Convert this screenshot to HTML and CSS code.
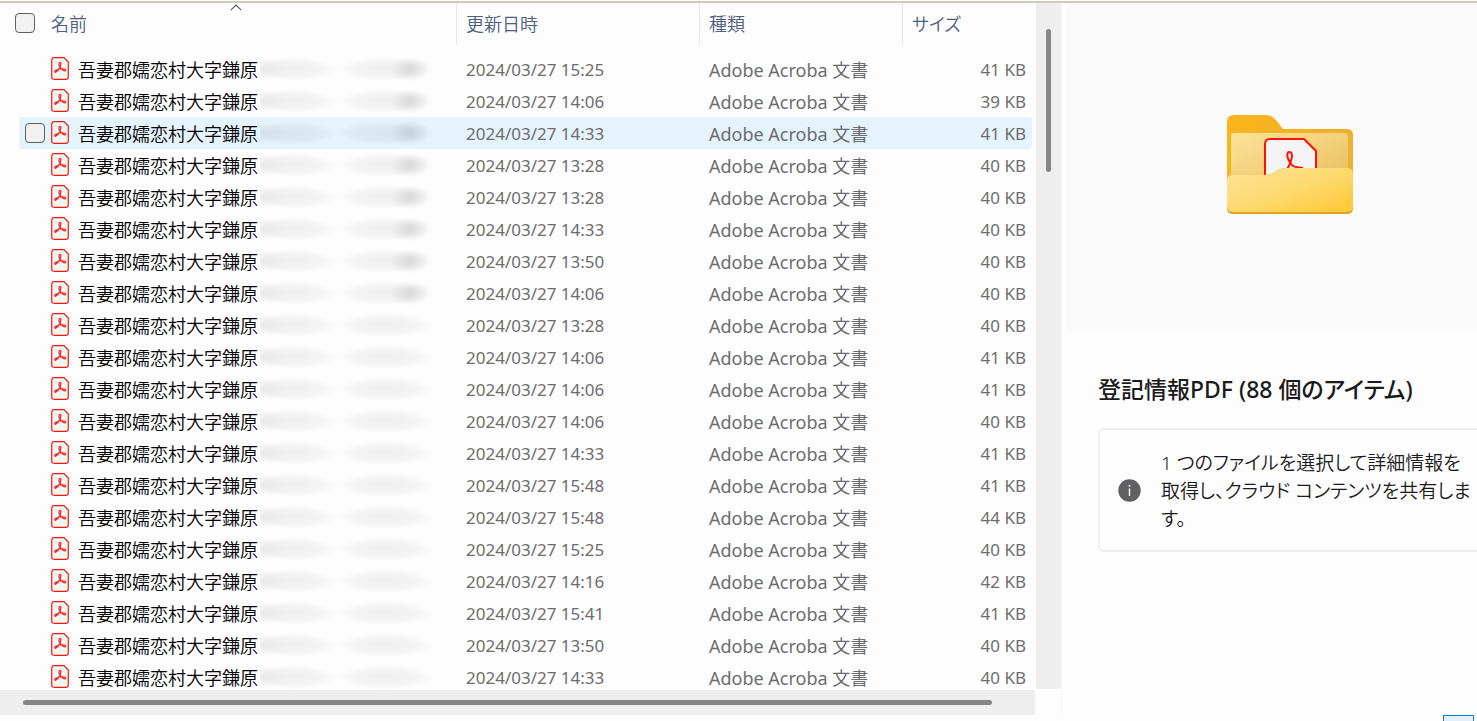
FILE: index.html
```html
<!DOCTYPE html>
<html lang="ja">
<head>
    <meta charset="UTF-8">
    <meta name="viewport" content="width=device-width, initial-scale=1.0">
    <title>登記情報PDF</title>
    <link rel="stylesheet" href="styles.css">
</head>
<body>
    <svg class="symbols" aria-hidden="true">
        <symbol id="pdf" viewBox="0 0 18 23">
            <path d="M3.2 .7H13L17.3 5V19.8Q17.3 22.3 14.8 22.3H3.2Q.7 22.3 .7 19.8V3.2Q.7 .7 3.2 .7Z" fill="#f5f3f3" stroke="#f01c10" stroke-width="1.2"/>
            <path d="M9 5.4C7.6 5.4 7.7 7.6 8.6 9.2C9.6 11 11.2 12.8 12.8 13.6C14.6 14.4 15.4 12.8 13.8 12.2C11.4 11.4 7 12.3 4.8 13.4C2.9 14.4 3.6 16 5 15C6.8 13.8 9.2 10.4 9.7 7.6C10 6.1 9.8 5.4 9 5.4Z" fill="none" stroke="#e8281e" stroke-width="1.2"/>
        </symbol>
    </svg>

    <div class="window">
        <div class="content">
            <main class="list">
                <table class="files">
                    <colgroup>
                        <col class="col-check">
                        <col class="col-name">
                        <col class="col-date">
                        <col class="col-type">
                        <col>
                    </colgroup>
                    <thead>
                        <tr>
                            <th><input type="checkbox" class="check check-all" aria-label="名前"></th>
                            <th class="name">名前
                                <svg class="sort" viewBox="0 0 12 7"><path d="M.8 6.2L6 1l5.2 5.2" fill="none" stroke="#555" stroke-width="1.1"/></svg>
                            </th>
                            <th class="line">更新日時</th>
                            <th class="line">種類</th>
                            <th class="line">サイズ</th>
                        </tr>
                    </thead>
                    <tbody>
                        <tr><td></td><td><div class="file"><svg><use href="#pdf"/></svg>吾妻郡嬬恋村大字鎌原<i class="smudge dark"></i></div></td><td>2024/03/27 15:25</td><td class="type">Adobe Acroba 文書</td><td>41 KB</td></tr>
                        <tr><td></td><td><div class="file"><svg><use href="#pdf"/></svg>吾妻郡嬬恋村大字鎌原<i class="smudge dark"></i></div></td><td>2024/03/27 14:06</td><td class="type">Adobe Acroba 文書</td><td>39 KB</td></tr>
                        <tr class="hover"><td><input type="checkbox" class="check" aria-label="吾妻郡嬬恋村大字鎌原"></td><td><div class="file"><svg><use href="#pdf"/></svg>吾妻郡嬬恋村大字鎌原<i class="smudge dark"></i></div></td><td>2024/03/27 14:33</td><td class="type">Adobe Acroba 文書</td><td>41 KB</td></tr>
                        <tr><td></td><td><div class="file"><svg><use href="#pdf"/></svg>吾妻郡嬬恋村大字鎌原<i class="smudge dark"></i></div></td><td>2024/03/27 13:28</td><td class="type">Adobe Acroba 文書</td><td>40 KB</td></tr>
                        <tr><td></td><td><div class="file"><svg><use href="#pdf"/></svg>吾妻郡嬬恋村大字鎌原<i class="smudge dark"></i></div></td><td>2024/03/27 13:28</td><td class="type">Adobe Acroba 文書</td><td>40 KB</td></tr>
                        <tr><td></td><td><div class="file"><svg><use href="#pdf"/></svg>吾妻郡嬬恋村大字鎌原<i class="smudge dark"></i></div></td><td>2024/03/27 14:33</td><td class="type">Adobe Acroba 文書</td><td>40 KB</td></tr>
                        <tr><td></td><td><div class="file"><svg><use href="#pdf"/></svg>吾妻郡嬬恋村大字鎌原<i class="smudge dark"></i></div></td><td>2024/03/27 13:50</td><td class="type">Adobe Acroba 文書</td><td>40 KB</td></tr>
                        <tr><td></td><td><div class="file"><svg><use href="#pdf"/></svg>吾妻郡嬬恋村大字鎌原<i class="smudge dark"></i></div></td><td>2024/03/27 14:06</td><td class="type">Adobe Acroba 文書</td><td>40 KB</td></tr>
                        <tr><td></td><td><div class="file"><svg><use href="#pdf"/></svg>吾妻郡嬬恋村大字鎌原<i class="smudge"></i></div></td><td>2024/03/27 13:28</td><td class="type">Adobe Acroba 文書</td><td>40 KB</td></tr>
                        <tr><td></td><td><div class="file"><svg><use href="#pdf"/></svg>吾妻郡嬬恋村大字鎌原<i class="smudge"></i></div></td><td>2024/03/27 14:06</td><td class="type">Adobe Acroba 文書</td><td>41 KB</td></tr>
                        <tr><td></td><td><div class="file"><svg><use href="#pdf"/></svg>吾妻郡嬬恋村大字鎌原<i class="smudge"></i></div></td><td>2024/03/27 14:06</td><td class="type">Adobe Acroba 文書</td><td>41 KB</td></tr>
                        <tr><td></td><td><div class="file"><svg><use href="#pdf"/></svg>吾妻郡嬬恋村大字鎌原<i class="smudge"></i></div></td><td>2024/03/27 14:06</td><td class="type">Adobe Acroba 文書</td><td>40 KB</td></tr>
                        <tr><td></td><td><div class="file"><svg><use href="#pdf"/></svg>吾妻郡嬬恋村大字鎌原<i class="smudge"></i></div></td><td>2024/03/27 14:33</td><td class="type">Adobe Acroba 文書</td><td>41 KB</td></tr>
                        <tr><td></td><td><div class="file"><svg><use href="#pdf"/></svg>吾妻郡嬬恋村大字鎌原<i class="smudge"></i></div></td><td>2024/03/27 15:48</td><td class="type">Adobe Acroba 文書</td><td>41 KB</td></tr>
                        <tr><td></td><td><div class="file"><svg><use href="#pdf"/></svg>吾妻郡嬬恋村大字鎌原<i class="smudge"></i></div></td><td>2024/03/27 15:48</td><td class="type">Adobe Acroba 文書</td><td>44 KB</td></tr>
                        <tr><td></td><td><div class="file"><svg><use href="#pdf"/></svg>吾妻郡嬬恋村大字鎌原<i class="smudge"></i></div></td><td>2024/03/27 15:25</td><td class="type">Adobe Acroba 文書</td><td>40 KB</td></tr>
                        <tr><td></td><td><div class="file"><svg><use href="#pdf"/></svg>吾妻郡嬬恋村大字鎌原<i class="smudge"></i></div></td><td>2024/03/27 14:16</td><td class="type">Adobe Acroba 文書</td><td>42 KB</td></tr>
                        <tr><td></td><td><div class="file"><svg><use href="#pdf"/></svg>吾妻郡嬬恋村大字鎌原<i class="smudge"></i></div></td><td>2024/03/27 15:41</td><td class="type">Adobe Acroba 文書</td><td>41 KB</td></tr>
                        <tr><td></td><td><div class="file"><svg><use href="#pdf"/></svg>吾妻郡嬬恋村大字鎌原<i class="smudge"></i></div></td><td>2024/03/27 13:50</td><td class="type">Adobe Acroba 文書</td><td>40 KB</td></tr>
                        <tr><td></td><td><div class="file"><svg><use href="#pdf"/></svg>吾妻郡嬬恋村大字鎌原<i class="smudge"></i></div></td><td>2024/03/27 14:33</td><td class="type">Adobe Acroba 文書</td><td>40 KB</td></tr>
                    </tbody>
                </table>
            </main>
            <div class="scroll-y"><div class="thumb"></div></div>
            <div class="scroll-x"><div class="thumb"></div></div>
            <aside class="details">
                <div class="preview">
                    <svg class="folder" viewBox="0 0 127 100">
                        <defs>
                            <linearGradient id="inner" x1="0" y1="0" x2="1" y2="1">
                                <stop offset="0" stop-color="#fde39b"/>
                                <stop offset="1" stop-color="#e8bd5c"/>
                            </linearGradient>
                            <linearGradient id="front" x1="0" y1="0" x2="1" y2="1">
                                <stop offset="0" stop-color="#fee49a"/>
                                <stop offset=".5" stop-color="#fdd970"/>
                                <stop offset="1" stop-color="#ffc832"/>
                            </linearGradient>
                            <linearGradient id="back" x1="0" y1="0" x2="1" y2="0">
                                <stop offset="0" stop-color="#fbb51b"/>
                                <stop offset="1" stop-color="#efb02c"/>
                            </linearGradient>
                        </defs>
                        <path d="M0 7Q0 0 7 0H38Q45 0 49 5L56 14H120Q126 14 126 20V90H0Z" fill="url(#back)"/>
                        <path d="M4 21Q4 18 7 18H117Q121 18 121 21V70H4Z" fill="url(#inner)"/>
                        <path d="M38 70V29Q38 24 43 24H77L89 36V70Z" fill="#f4f4f5" stroke="#fe1204" stroke-width="2"/>
                        <path d="M59 56C65 47 67 37 62.500 37C58 37 61 47 66 51C69 53 73 52 76 53" fill="none" stroke="#fe1204" stroke-width="2"/>
                        <path d="M0 65Q0 60 5 60H37C49 60 49 53 59 53H120Q126 53 126 59V93Q126 99 120 99H6Q0 99 0 93Z" fill="#dea32b"/>
                        <path d="M0 65Q0 60 5 60H37C49 60 49 53 59 53H120Q126 53 126 59V91Q126 97 120 97H6Q0 97 0 91Z" fill="url(#front)"/>
                    </svg>
                </div>
                <h1>登記情報PDF (88 個のアイテム)</h1>
                <div class="info">
                    <svg class="info-icon" viewBox="0 0 23 23">
                        <circle cx="11.5" cy="11.5" r="11.2" fill="#606062"/>
                        <path d="M11.5 9.5V17" stroke="#fff" stroke-width="1.4"/>
                        <circle cx="11.5" cy="6.8" r="1" fill="#fff"/>
                    </svg>
                    <p>1 つのファイルを選択して詳細情報を取得し、クラウド コンテンツを共有します。</p>
                </div>
            </aside>
        </div>
        <footer class="status">
            <button type="button" class="view" aria-label="詳細"></button>
        </footer>
    </div>
</body>
</html>
```
FILE: styles.css
```css
* {
    box-sizing: border-box;
}
body {
    margin: 0;
    background-color: #fdfdfd;
    color: #6d6d6d;
    font-family: "Noto Sans", "Noto Sans CJK JP", sans-serif;
    font-size: 17px;
}
.symbols {
    display: none;
}
.window {
    display: flex;
    flex-direction: column;
    height: 100vh;
    padding-top: 1px;
    overflow: hidden;
}
.content {
    flex: 1;
    min-height: 0;
    display: grid;
    grid-template-columns: minmax(0, 1fr) 25px 416px;
    grid-template-rows: minmax(0, 1fr) 25px;
    border-top: 2px solid #cdcbbd;
}

/* file list */
.list {
    overflow: hidden;
    padding: 0 4px 0 19px;
}
.files {
    width: 100%;
    table-layout: fixed;
    border-collapse: separate;
    border-spacing: 0;
}
.col-check {
    width: 32px;
}
.col-name {
    width: 405px;
}
.col-date {
    width: 243px;
}
.col-type {
    width: 203px;
}
.files th {
    height: 42px;
    padding: 0 0 2px;
    text-align: left;
    font-family: "Noto Sans CJK JP", sans-serif;
    font-size: 18px;
    font-weight: 350;
    font-feature-settings: "palt";
    line-height: 24px;
    color: #4c607f;
}
.files th.line {
    padding-left: 9px;
    border-left: 1px solid #e6e6e6;
}
.files th.name {
    position: relative;
}
.sort {
    position: absolute;
    top: 1px;
    left: 179px;
    width: 12px;
    height: 7px;
}
.files tbody::before {
    content: "";
    display: block;
    height: 8px;
}
.files td {
    height: 32px;
    padding: 2px 0 0 10px;
    line-height: 24px;
    white-space: nowrap;
}
.files td:first-child {
    padding: 0 0 0 6px;
}
.files td:nth-child(2) {
    padding: 0;
}
.files td:last-child {
    padding-right: 6px;
    text-align: right;
}
.files td.type {
    font-size: 18px;
}
.hover td {
    background-color: #e5f3fd;
}
.hover td:first-child {
    border-radius: 3px 0 0 3px;
}
.hover td:last-child {
    border-radius: 0 3px 3px 0;
}
.check {
    appearance: none;
    display: block;
    width: 20px;
    height: 20px;
    margin: 0;
    border: 1px solid #5f5f5f;
    border-radius: 4px;
    background-color: #f1f1f1;
}
.check-all {
    margin-left: -4px;
}
.file {
    display: flex;
    align-items: center;
    color: #000;
    font-family: "Noto Sans CJK JP", sans-serif;
    font-size: 18px;
    font-weight: 350;
}
.file svg {
    flex: none;
    width: 18px;
    height: 23px;
    margin: 0 9px 2px 0;
}
.smudge {
    width: 172px;
    height: 26px;
    margin-left: 2px;
    background-image:
        radial-gradient(ellipse 46px 12px at 32px 50%, rgba(0, 0, 0, 0.06), rgba(0, 0, 0, 0.04) 60%, transparent),
        radial-gradient(ellipse 30px 12px at 0 50%, rgba(0, 0, 0, 0.04), transparent),
        radial-gradient(ellipse 50px 12px at 126px 50%, rgba(0, 0, 0, 0.06), rgba(0, 0, 0, 0.04) 60%, transparent);
}
.smudge.dark {
    background-image:
        radial-gradient(ellipse 46px 12px at 32px 50%, rgba(0, 0, 0, 0.06), rgba(0, 0, 0, 0.04) 60%, transparent),
        radial-gradient(ellipse 30px 12px at 0 50%, rgba(0, 0, 0, 0.04), transparent),
        radial-gradient(ellipse 50px 12px at 126px 50%, rgba(0, 0, 0, 0.06), rgba(0, 0, 0, 0.04) 60%, transparent),
        radial-gradient(ellipse 20px 13px at 150px 50%, rgba(0, 0, 0, 0.11), transparent);
}

/* scrollbars */
.scroll-y {
    grid-column: 2;
    margin-bottom: 1px;
    padding-top: 26px;
    background-color: #eee;
}
.scroll-y .thumb {
    width: 5px;
    height: 143px;
    margin-left: 10px;
    border-radius: 3px;
    background-color: #868686;
}
.scroll-x {
    grid-column: 1;
    grid-row: 2;
    margin-right: 1px;
    padding: 10px 43px 0 23px;
    background-color: #eee;
}
.scroll-x .thumb {
    height: 5px;
    border-radius: 3px;
    background-color: #868686;
}

/* details pane */
.details {
    grid-column: 3;
    grid-row: 1 / 3;
    min-width: 0;
    padding-left: 4px;
    border-left: 1px solid #f6f6f6;
}
.preview {
    display: flex;
    justify-content: center;
    align-items: center;
    height: 330px;
    padding-bottom: 6px;
    border-radius: 6px 0 0 6px;
    background-color: #fafafa;
}
.folder {
    width: 127px;
    height: 100px;
    margin-left: 38px;
}
.details h1 {
    margin: 38px 0 21px 32px;
    color: #1b1b1b;
    font-size: 23px;
    font-weight: 500;
    font-feature-settings: "palt";
    line-height: 36px;
    white-space: nowrap;
}
.info {
    display: flex;
    align-items: center;
    gap: 20px;
    margin-left: 32px;
    padding: 19px 0 17px 18px;
    border: 2px solid #eee;
    border-right: 0;
    border-radius: 6px 0 0 6px;
}
.info-icon {
    flex: none;
    width: 23px;
    height: 23px;
    margin-bottom: 2px;
}
.info p {
    margin: 0;
    color: #1b1b1b;
    font-size: 19px;
    font-weight: 350;
    font-feature-settings: "palt";
    line-height: 28px;
}

/* status bar */
.status {
    flex: none;
    display: flex;
    justify-content: flex-end;
    height: 6px;
    padding-right: 3px;
    overflow: hidden;
}
.view {
    width: 31px;
    height: 24px;
    padding: 0;
    border: 1px solid #1979ca;
    background-color: #e0f1fb;
}
```
